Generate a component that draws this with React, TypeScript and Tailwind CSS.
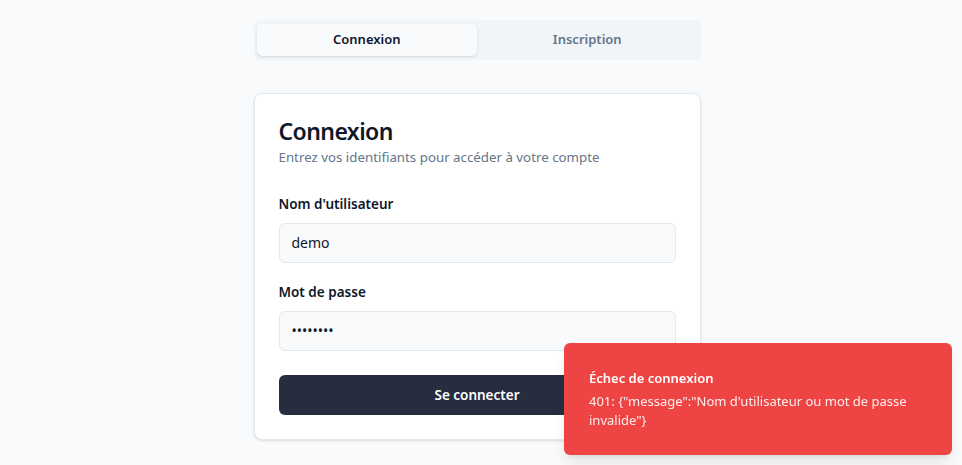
import { useState } from "react";

export default function App() {
  const [tab, setTab] = useState<"login" | "register">("login");
  const [username, setUsername] = useState("demo");
  const [password, setPassword] = useState("password");

  const toastText = '401: {"message":"Nom d\'utilisateur ou mot de passe invalide"}';

  return (
    <div
      className="min-h-[465px] bg-[#f8fafc] text-[#0f172a]"
      style={{ fontFamily: '"Noto Sans", "Open Sans", sans-serif' }}
    >
      <div className="pr-[8px] pt-5">
        <div className="mx-auto w-[447px]">
          {/* Onglets */}
          <div className="grid h-10 grid-cols-2 items-center rounded-md bg-[#f1f5f9] p-[3px]">
            <button
              onClick={() => setTab("login")}
              className={
                tab === "login"
                  ? "h-[32px] rounded-[5px] bg-[#f8fafc] text-[13px] font-semibold text-[#0f172a] shadow-sm"
                  : "h-[32px] rounded-[5px] text-[13px] font-semibold text-[#64748b]"
              }
            >
              Connexion
            </button>
            <button
              onClick={() => setTab("register")}
              className={
                tab === "register"
                  ? "h-[32px] rounded-[5px] bg-[#f8fafc] text-[13px] font-semibold text-[#0f172a] shadow-sm"
                  : "h-[32px] rounded-[5px] text-[13px] font-semibold text-[#64748b]"
              }
            >
              Inscription
            </button>
          </div>

          {/* Carte */}
          <div className="mt-[33px] rounded-lg border border-[#e2e8f0] bg-white px-6 pb-6 pt-[21px] shadow-sm">
            <h1 className="text-[23px] font-semibold leading-8 tracking-tight">Connexion</h1>
            <p className="mt-[1px] text-[13.3px] text-[#64748b]">
              Entrez vos identifiants pour accéder à votre compte
            </p>

            <div className="mt-[26px] flex flex-col">
              <label className="text-[13.5px] font-semibold leading-5">Nom d'utilisateur</label>
              <input
                value={username}
                onChange={(e) => setUsername(e.target.value)}
                className="mt-[9px] h-10 rounded-md border border-[#e2e8f0] bg-[#f8fafc] px-3 text-[14px] outline-none"
              />

              <label className="mt-[19px] text-[13.5px] font-semibold leading-5">Mot de passe</label>
              <input
                type="password"
                value={password}
                onChange={(e) => setPassword(e.target.value)}
                className="mt-[9px] h-10 rounded-md border border-[#e2e8f0] bg-[#f8fafc] px-3 text-[14px] outline-none"
              />

              <button className="mt-6 h-10 rounded-md bg-[#262d3f] text-[13.5px] font-semibold text-white">
                Se connecter
              </button>
            </div>
          </div>
        </div>
      </div>

      {/* Notification */}
      <div className="fixed bottom-[10px] right-[10px] w-[388px] rounded-md bg-[#ef4444] px-[25px] pb-[25px] pt-[25px] text-white shadow-lg">
        <div className="text-[13px] font-semibold leading-5">Échec de connexion</div>
        <div className="mt-[4px] text-[13px] leading-[19px] text-white/90">{toastText}</div>
      </div>
    </div>
  );
}
